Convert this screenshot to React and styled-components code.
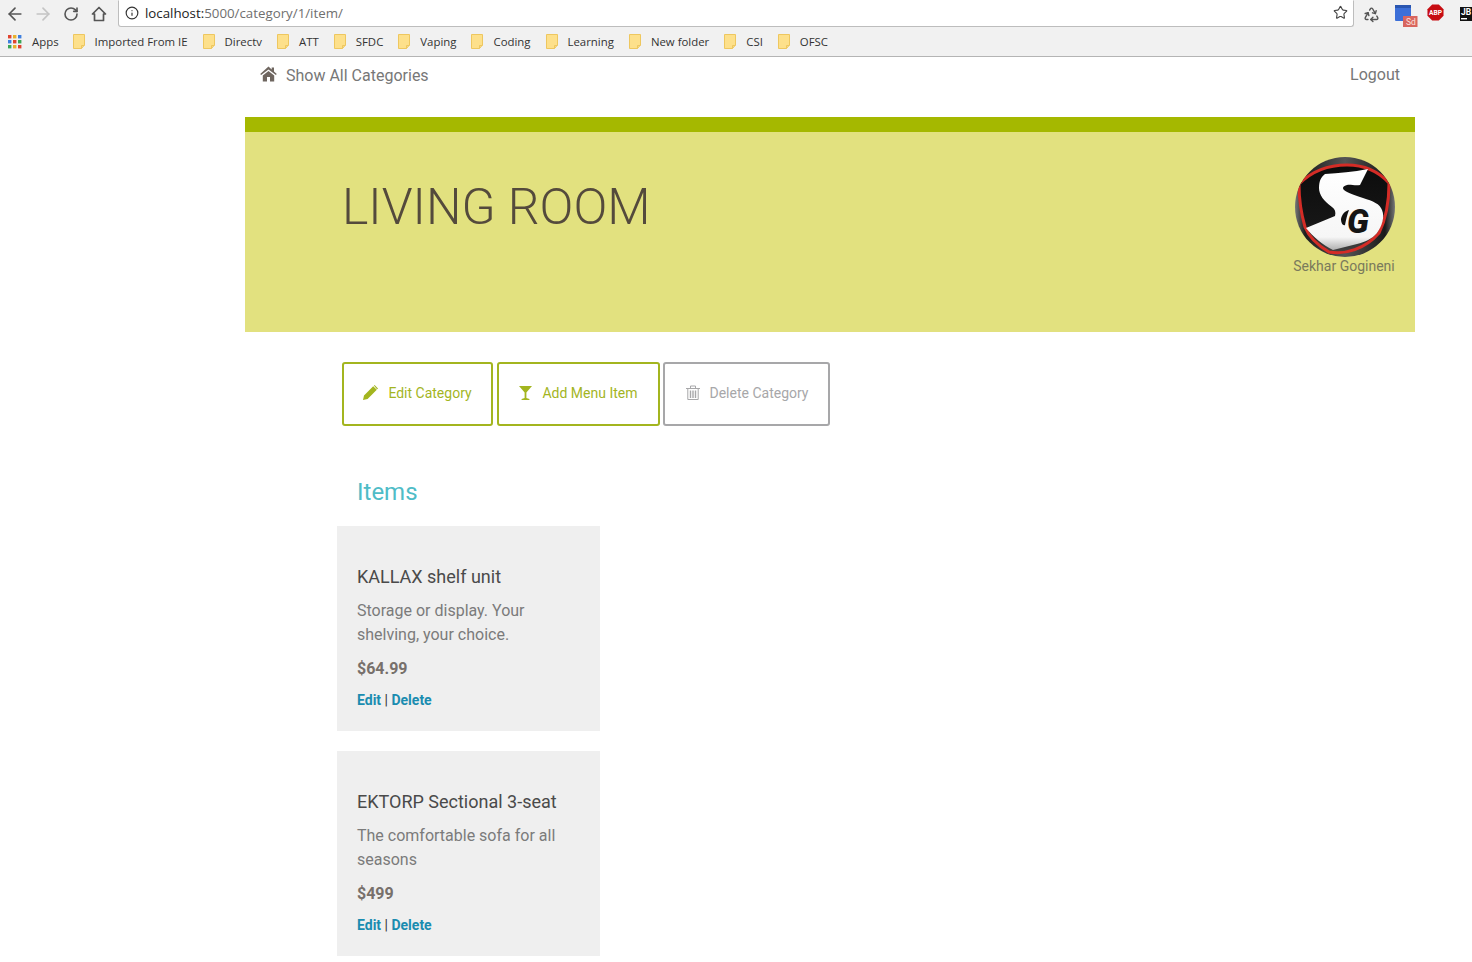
import React from 'react';
import styled, { createGlobalStyle } from 'styled-components';
import { ArrowLeft, ArrowRight, RotateCw, Info, Star, Recycle } from 'lucide-react';

const GlobalStyle = createGlobalStyle`
    html, body {
        margin: 0;
        padding: 0;
        background: #fff;
        font-family: Roboto, "Liberation Sans", sans-serif;
        overflow: hidden;
    }
`

const Browser = styled.div`
    background: #f1f1f1;
    height: 56px;
    border-bottom: 1px solid #b4b4b4;
`

const Toolbar = styled.div`
    height: 28px;
    display: flex;
    align-items: center;
    padding-left: 1px;
`

const NavButton = styled.span`
    flex: none;
    width: 28px;
    height: 26px;
    display: flex;
    align-items: center;
    justify-content: center;
    color: ${p => p.$off ? '#c4c4c4' : '#555'};
`

const Omnibox = styled.div`
    flex: none;
    width: 1236px;
    height: 27px;
    margin-left: 5px;
    margin-top: -1px;
    box-sizing: border-box;
    background: #fff;
    border: 1px solid #bdbdbd;
    border-top-color: #fff;
    border-radius: 0 0 3px 3px;
    display: flex;
    align-items: center;
    padding: 0 5px 2px 6px;
    font: 13.3px "Open Sans", "Noto Sans", sans-serif;
    color: #6f6f6f;
`

const Host = styled.span`
    color: #222;
    margin-left: 6px;
`

const Spacer = styled.span`
    flex: 1;
`

const Extensions = styled.div`
    flex: none;
    display: flex;
    align-items: center;
    margin-left: 9px;
    color: #555;
`

const ExtIcon = styled.svg`
    display: block;
    flex: none;
    margin-left: ${p => p.$ml || 0}px;
    margin-top: ${p => p.$mt || 0}px;
`

const Bookmarks = styled.div`
    height: 28px;
    box-sizing: border-box;
    padding: 0 0 1px 8px;
    display: flex;
    align-items: center;
    font: 11.4px "Open Sans", "Noto Sans", sans-serif;
    color: #333;
`

const Mark = styled.span`
    display: flex;
    align-items: center;
    gap: 10px;
    margin-left: ${p => p.$gap || 15}px;
`

const AppsLabel = styled.span`
    margin-left: 10px;
`

const Nav = styled.nav`
    width: 1170px;
    height: 60px;
    margin-left: 245px;
    box-sizing: border-box;
    padding: 9px 15px 0 15px;
    display: flex;
    justify-content: space-between;
    font-size: 16px;
    color: #777;
`

const NavLink = styled.a`
    display: flex;
    align-items: flex-start;
    gap: 9px;
    height: 20px;
    line-height: 19px;
    margin-top: ${p => p.$up ? -1 : 0}px;
`

const Banner = styled.header`
    width: 1170px;
    height: 215px;
    margin-left: 245px;
    box-sizing: border-box;
    background: #e2e17f;
    border-top: 15px solid #a5b800;
    display: flex;
    justify-content: space-between;
    padding: 0 20px 0 97px;
`

const Title = styled.h1`
    margin: 47px 0 0;
    font-size: 50px;
    line-height: 56px;
    font-weight: 300;
    color: #544a3c;
`

const Profile = styled.div`
    width: 102px;
    padding-top: 25px;
    display: flex;
    flex-direction: column;
    align-items: center;
    font-size: 14px;
    line-height: 18px;
    color: #7a7a5c;
    white-space: nowrap;
`

const Actions = styled.div`
    display: flex;
    gap: 4px;
    margin: 30px 0 0 342px;
`

const ActionButton = styled.button`
    width: ${p => p.$w}px;
    margin-right: ${p => p.$mr || 0}px;
    height: 64px;
    box-sizing: border-box;
    background: #fff;
    border: 2px solid ${p => p.$muted ? '#a7a7a9' : '#a3b51f'};
    border-radius: 3px;
    display: flex;
    align-items: center;
    justify-content: center;
    gap: 10px;
    font: 14px Roboto, sans-serif;
    color: ${p => p.$muted ? '#a7a7a9' : '#a3b51f'};
    padding: 0 0 2px;
`

const ItemsTitle = styled.h2`
    margin: 50px 0 18px 357px;
    font-size: 24px;
    line-height: 32px;
    font-weight: 400;
    color: #4fbcc7;
`

const ItemList = styled.div`
    display: flex;
    flex-direction: column;
    gap: 20px;
    margin-left: 337px;
    width: 263px;
`

const Card = styled.article`
    height: 205px;
    box-sizing: border-box;
    background: #efefef;
    padding: 41px 20px 0;
`

const ItemName = styled.h3`
    margin: 0;
    font-size: 18px;
    line-height: 20px;
    font-weight: 400;
    color: #4a4a4a;
`

const ItemDesc = styled.p`
    margin: 12px 0 0;
    font-size: 16px;
    line-height: 24px;
    color: #7b7b7b;
`

const Price = styled.p`
    margin: 11px 0 0;
    font-size: 16px;
    line-height: 22px;
    font-weight: 700;
    color: #77706b;
`

const Links = styled.p`
    margin: 10px 0 0;
    font-size: 14px;
    line-height: 20px;
    color: #333;
`

const ItemLink = styled.a`
    font-weight: 700;
    color: #1a8cb0;
`

const Folder = () => (
    <ExtIcon width="12" height="15" viewBox="0 0 12 15">
        <path d="M.5.5h11v10.5l-3 3.5H.5z" fill="#fde08b" stroke="#eec75f" />
        <path d="M8.5 14.5v-3h3" fill="none" stroke="#eec75f" />
    </ExtIcon>
)

const AppsGrid = () => {
    const colors = ['#e0432f', '#e9b12c', '#3e7fe0', '#3e7fe0', '#e0432f', '#3aa655', '#3aa655', '#e9b12c', '#e0432f']
    return (
        <ExtIcon width="14" height="14" viewBox="0 0 14 14">
            {colors.map((c, i) => (
                <rect key={i} x={(i % 3) * 5} y={Math.floor(i / 3) * 5} width="3.4" height="3.4" fill={c} />
            ))}
        </ExtIcon>
    )
}

const BrowserHome = () => (
    <ExtIcon width="16" height="16" viewBox="0 0 16 16" fill="none" stroke="#555" strokeWidth="1.7">
        <path d="M8 1.5L14.5 8H12.5V14.5H3.5V8H1.5z" strokeLinejoin="round" />
    </ExtIcon>
)

const SdIcon = () => (
    <ExtIcon width="23" height="22" viewBox="0 0 23 22" $ml={15} $mt={4}>
        <rect width="16" height="16" rx="1" fill="#3c6fd8" />
        <rect width="16" height="3" fill="#2a56b0" />
        <rect x="8" y="11" width="14.5" height="11" fill="#d9665f" />
        <text x="11" y="20" fontSize="8.5" fontFamily="Roboto" fill="#fbe3df">Sd</text>
    </ExtIcon>
)

const AbpIcon = () => (
    <ExtIcon width="17" height="17" viewBox="0 0 18 18" $ml={9} $mt={-3}>
        <path d="M5.5.5h7l5 5v7l-5 5h-7l-5-5v-7z" fill="#c70d12" />
        <text x="9" y="11.5" textAnchor="middle" fontSize="7" fontWeight="700" fontFamily="Roboto" fill="#fff">ABP</text>
    </ExtIcon>
)

const JbIcon = () => (
    <ExtIcon width="14" height="14" viewBox="0 0 14 14" $ml={16}>
        <rect width="14" height="14" fill="#111" />
        <text x="1" y="8" fontSize="8.5" fontWeight="700" fontFamily="Roboto" fill="#fff">JB</text>
        <rect x="1" y="11" width="6" height="1.4" fill="#fff" />
    </ExtIcon>
)

const HomeGlyph = () => (
    <ExtIcon width="17" height="16" viewBox="0 0 17 16">
        <path d="M8.5.5l3.2 2.9V1.5h2.3v4l2.8 2.6-.9 1L8.5 3.4 1.1 9.1l-.9-1z" fill="#6f6660" />
        <path d="M2.8 9.4l5.7-4.5 5.7 4.5V15.5H10V11H7v4.5H2.8z" fill="#6f6660" />
    </ExtIcon>
)

const Pencil = () => (
    <ExtIcon width="15" height="15" viewBox="0 0 15 15" $mt={-2}>
        <path d="M0 15l1-4.6L10.2 1.2l3.6 3.6L4.6 14zM11 .4l.6-.4 3.4 3.4-.4.6-.6.3L11.3 1z" fill="#a3b51f" />
    </ExtIcon>
)

const Glass = () => (
    <ExtIcon width="13" height="14" viewBox="0 0 13 14" $mt={-1}>
        <path d="M0 0h13L7.4 6.4V12l3 1v1H2.6v-1l3-1V6.4z" fill="#a3b51f" />
    </ExtIcon>
)

const Trash = () => (
    <ExtIcon width="14" height="15" viewBox="0 0 14 15" fill="none" stroke="#a7a7a9" $mt={-2} $ml={1}>
        <path d="M0 3.5h14M4.5 3V1h5v2" />
        <path d="M1.8 3.5v11h10.4v-11" />
        <path d="M4.5 5.5v7.5M7 5.5v7.5M9.5 5.5v7.5" strokeWidth="1.4" />
    </ExtIcon>
)

const Avatar = () => (
    <ExtIcon width="100" height="100" viewBox="0 0 100 100" $ml={2}>
        <defs>
            <clipPath id="disc"><circle cx="50" cy="50" r="50" /></clipPath>
            <linearGradient id="rim" x1="0" y1="0" x2="1" y2="0">
                <stop offset="0" stopColor="#777" />
                <stop offset="0.1" stopColor="#1d1d1d" />
                <stop offset="0.5" stopColor="#555" />
                <stop offset="0.9" stopColor="#1a1a1a" />
                <stop offset="1" stopColor="#777" />
            </linearGradient>
            <linearGradient id="body" x1="0" y1="0" x2="0" y2="1">
                <stop offset="0" stopColor="#0c0c0c" />
                <stop offset="0.65" stopColor="#161616" />
                <stop offset="1" stopColor="#444" />
            </linearGradient>
            <linearGradient id="white" x1="0" y1="0" x2="0" y2="1">
                <stop offset="0" stopColor="#fff" />
                <stop offset="0.84" stopColor="#f6f6f6" />
                <stop offset="1" stopColor="#b0b0b0" />
            </linearGradient>
        </defs>
        <g clipPath="url(#disc)">
            <rect width="100" height="100" fill="url(#rim)" />
            <path d="M4 27C18 13 36 8 52 8 70 8 84 15 94 26 94 46 91 62 84 76 70 92 50 98 34 95 22 88 14 80 10 70 6 56 4 42 4 27z" fill="url(#body)" stroke="#d42c26" strokeWidth="3" />
            <path d="M24 31C24 24 26 20 30 17 44 16 58 15 73 12L65 28C60 29 55 27 52 28 48 29 47 31 49 33 52 36 60 38 68 41 78 44 85 47 87 53 90 60 87 69 82 76 77 82 70 85 62 87L38 93C28 88 18 80 11 71L40 59C41 55 40 52 37 50 29 44 24 38 24 31z" fill="url(#white)" />
            <path d="M46 62C47 57 50 54 54 53 52 58 51 63 50 68 48 69 46 66 46 62z" fill="#111" />
            <text x="63" y="76" textAnchor="middle" fontFamily="Roboto" fontSize="33" fontWeight="900" fontStyle="italic" fill="#141414">G</text>
        </g>
    </ExtIcon>
)

const BOOKMARKS = ['Imported From IE', 'Directv', 'ATT', 'SFDC', 'Vaping', 'Coding', 'Learning', 'New folder', 'CSI', 'OFSC']

const ITEMS = [
    { name: 'KALLAX shelf unit', desc: 'Storage or display. Your shelving, your choice.', price: '$64.99' },
    { name: 'EKTORP Sectional 3-seat', desc: 'The comfortable sofa for all seasons', price: '$499' },
]

export default function App() {
    return (
        <>
            <GlobalStyle />
            <Browser>
                <Toolbar>
                    <NavButton><ArrowLeft size={20} strokeWidth={2} /></NavButton>
                    <NavButton $off><ArrowRight size={20} strokeWidth={2} /></NavButton>
                    <NavButton><RotateCw size={16} strokeWidth={2.4} /></NavButton>
                    <NavButton><BrowserHome /></NavButton>
                    <Omnibox>
                        <Info size={14} color="#333" />
                        <Host>localhost:</Host>5000/category/1/item/
                        <Spacer />
                        <Star size={15} color="#444" strokeWidth={1.8} />
                    </Omnibox>
                    <Extensions>
                        <Recycle size={17} />
                        <SdIcon />
                        <AbpIcon />
                        <JbIcon />
                    </Extensions>
                </Toolbar>
                <Bookmarks>
                    <AppsGrid />
                    <AppsLabel>Apps</AppsLabel>
                    {BOOKMARKS.map((b, i) => (
                        <Mark key={b} $gap={i === 0 ? 14 : 15}>
                            <Folder />
                            {b}
                        </Mark>
                    ))}
                </Bookmarks>
            </Browser>
            <Nav>
                <NavLink><HomeGlyph />Show All Categories</NavLink>
                <NavLink $up>Logout</NavLink>
            </Nav>
            <Banner>
                <Title>LIVING ROOM</Title>
                <Profile>
                    <Avatar />
                    Sekhar Gogineni
                </Profile>
            </Banner>
            <Actions>
                <ActionButton $w={151}><Pencil />Edit Category</ActionButton>
                <ActionButton $w={163} $mr={-1}><Glass />Add Menu Item</ActionButton>
                <ActionButton $w={167} $muted><Trash />Delete Category</ActionButton>
            </Actions>
            <ItemsTitle>Items</ItemsTitle>
            <ItemList>
                {ITEMS.map(item => (
                    <Card key={item.name}>
                        <ItemName>{item.name}</ItemName>
                        <ItemDesc>{item.desc}</ItemDesc>
                        <Price>{item.price}</Price>
                        <Links><ItemLink>Edit</ItemLink> | <ItemLink>Delete</ItemLink></Links>
                    </Card>
                ))}
            </ItemList>
        </>
    )
}
